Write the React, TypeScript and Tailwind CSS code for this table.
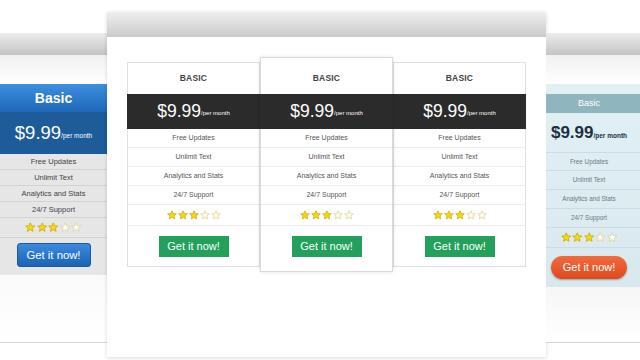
import React from "react";

const features = ["Free Updates", "Unlimit Text", "Analytics and Stats", "24/7 Support"];

function Star({ filled, size = 10 }: { filled: boolean; size?: number }) {
  return (
    <svg width={size} height={size} viewBox="0 0 20 20">
      <polygon
        points="10,1.5 12.6,7.2 18.7,7.7 14,11.8 15.4,17.9 10,14.7 4.6,17.9 6,11.8 1.3,7.7 7.4,7.2"
        fill={filled ? "#f6d80e" : "#fffbe6"}
        stroke={filled ? "#c9a60a" : "#d9cf9a"}
        strokeWidth="1.4"
        strokeLinejoin="round"
      />
    </svg>
  );
}

function Stars({ size = 10 }: { size?: number }) {
  return (
    <div className="flex items-center justify-center gap-px">
      {[0, 1, 2, 3, 4].map((i) => (
        <Star key={i} filled={i < 3} size={size} />
      ))}
    </div>
  );
}

// Tabla lateral izquierda (azul)
function BlueCard() {
  return (
    <div className="mt-[33px] w-[107px] h-[310px] shrink-0 flex flex-col bg-white border-b border-[#d6d6d6]">
      <div className="h-[22px] bg-linear-to-b from-[#ececec] to-[#c4c4c4]" />
      <div className="h-[29px] bg-linear-to-b from-[#f1f1f1] to-white" />
      <div className="h-[28px] bg-linear-to-b from-[#3d8fe0] to-[#1f67b6] flex items-center justify-center text-white font-bold text-[14px]">
        Basic
      </div>
      <div className="h-[42px] bg-[#1e5b99] flex items-center justify-center text-white">
        <span className="text-[18.5px] leading-none">$9.99</span>
        <span className="text-[6.5px] self-end mb-[13px]">/per month</span>
      </div>
      <div className="bg-[#e6e6e6]">
        {features.map((f) => (
          <div
            key={f}
            className="h-[16px] border-b border-[#d3d3d3] flex items-center justify-center text-[7.5px] text-[#444]"
          >
            {f}
          </div>
        ))}
        <div className="h-[20px] border-b border-[#d3d3d3] flex items-center justify-center">
          <Stars size={10.5} />
        </div>
        <div className="h-[37px] flex items-start justify-center pt-[5px]">
          <button className="w-[74px] h-[24px] rounded-[3px] bg-linear-to-b from-[#3a8ae0] to-[#1b63b4] border border-[#1a5aa0] text-white text-[11.3px]">
            Get it now!
          </button>
        </div>
      </div>
      <div className="flex-1 bg-linear-to-b from-[#fafafa] to-white" />
    </div>
  );
}

function Column({ featured }: { featured?: boolean }) {
  return (
    <div
      className={
        featured
          ? "relative z-10 w-[133px] shrink-0 bg-white border border-[#dadada] shadow-[0_0_4px_rgba(0,0,0,0.12)]"
          : "mt-[5px] w-[133px] shrink-0 bg-white border border-[#e0e0e0]"
      }
    >
      <div
        className={
          (featured ? "h-[36px] pt-[5px]" : "h-[31px]") +
          " flex items-center justify-center text-[8.5px] font-bold text-[#444] tracking-[0.2px]"
        }
      >
        BASIC
      </div>
      <div className="h-[35px] -mx-px bg-[#2b2b2b] flex items-center justify-center text-white">
        <span className="text-[17.5px] leading-none">$9.99</span>
        <span className="text-[6px] self-end mb-[11px]">/per month</span>
      </div>
      {features.map((f) => (
        <div
          key={f}
          className="h-[19px] border-b border-[#ececec] flex items-center justify-center text-[7px] text-[#555]"
        >
          {f}
        </div>
      ))}
      <div className="h-[21px] border-b border-[#ececec] flex items-center justify-center">
        <Stars size={10} />
      </div>
      <div className={(featured ? "h-[45px]" : "h-[40px]") + " flex items-start justify-center pt-[10px]"}>
        <button className="w-[70px] h-[21px] bg-[#23a05b] text-white text-[11px]">Get it now!</button>
      </div>
    </div>
  );
}

// Tabla central (blanca)
function CenterCard() {
  return (
    <div className="mt-[12px] w-[439px] h-[345px] shrink-0 bg-white shadow-[0_1px_4px_rgba(0,0,0,0.15)] flex flex-col">
      <div className="h-[25px] bg-linear-to-b from-[#eeeeee] to-[#cbcbcb]" />
      <div className="flex items-start px-[20px] pt-[20px]">
        <Column />
        <Column featured />
        <Column />
      </div>
    </div>
  );
}

// Tabla lateral derecha (celeste)
function LightCard() {
  return (
    <div className="mt-[33px] w-[94px] h-[310px] shrink-0 flex flex-col bg-white border-b border-[#d6d6d6]">
      <div className="h-[22px] bg-linear-to-b from-[#ececec] to-[#c4c4c4]" />
      <div className="h-[29px] bg-linear-to-b from-[#f1f1f1] to-white" />
      <div className="h-[203px] bg-linear-to-b from-[#e2f0f4] to-[#d8e9ee] pt-[10px] flex flex-col">
        <div className="h-[19px] bg-[#8fb5bf] flex items-center justify-center text-white text-[9px] pr-[8px]">
          Basic
        </div>
        <div className="h-[39px] flex items-center justify-center text-[#1c2f42] font-bold pr-[8px]">
          <span className="text-[17px] leading-none">$9.99</span>
          <span className="text-[6.5px] self-end mb-[11px]">/per month</span>
        </div>
        {features.map((f, i) => (
          <div
            key={f}
            className={
              (i === 0 ? "border-t " : "") +
              "h-[19px] border-b border-[#c9dde3] flex items-center justify-center text-[6.3px] text-[#6b7a80] pr-[8px]"
            }
          >
            {f}
          </div>
        ))}
        <div className="h-[20px] border-b border-[#c9dde3] flex items-center justify-center pr-[8px]">
          <Stars size={10.5} />
        </div>
        <div className="flex justify-center pt-[8px] pr-[8px]">
          <button className="w-[76px] h-[23px] rounded-full bg-linear-to-b from-[#f26a3c] to-[#dd4a1e] text-white text-[11px] shadow-[0_1px_2px_rgba(0,0,0,0.3)]">
            Get it now!
          </button>
        </div>
      </div>
      <div className="flex-1 bg-linear-to-b from-[#f6f6f6] to-white" />
    </div>
  );
}

export default function App() {
  return (
    <main className="w-[640px] h-[360px] overflow-hidden bg-white flex font-['Liberation_Sans',Arial,sans-serif]">
      <BlueCard />
      <CenterCard />
      <LightCard />
    </main>
  );
}
